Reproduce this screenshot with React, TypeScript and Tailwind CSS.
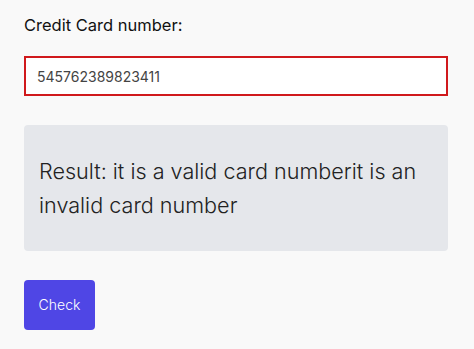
import React, { useState } from 'react';

const App: React.FC = () => {
  const [value, setValue] = useState('545762389823411');

  return (
    <div className="min-h-[349px] bg-[#f9f9f9] px-6 pt-[13px] font-['Inter',sans-serif]">
      <label className="block text-[16.5px] leading-6 text-[#111]">Credit Card number:</label>
      <input
        value={value}
        onChange={(e) => setValue(e.target.value)}
        className="mt-[19px] block h-10 w-[424px] border-2 border-[#d0191c] bg-white px-[11px] text-sm text-[#444] outline-none"
      />
      <div className="mt-[29px] h-[126px] w-[424px] rounded bg-[#e5e7eb] px-[15px] pt-[29px]">
        <p className="text-[21.6px] font-light leading-[34px] text-[#222]">
          Result: it is a valid card numberit is an invalid card number
        </p>
      </div>
      <button className="mt-[29px] h-[50px] w-[71px] rounded-sm bg-[#4f46e5] text-sm font-light text-white">
        Check
      </button>
    </div>
  );
};

export default App;
